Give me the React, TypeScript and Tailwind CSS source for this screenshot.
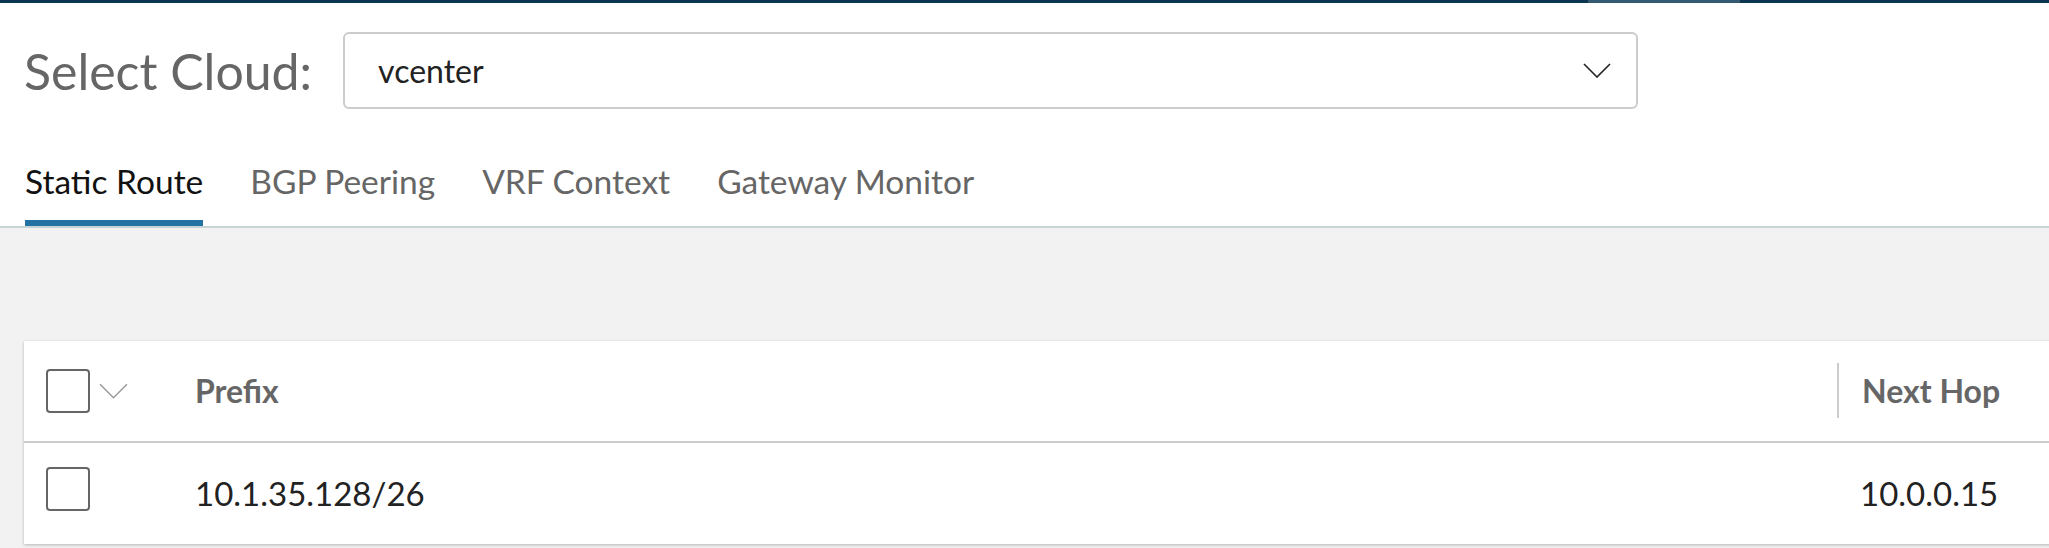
import React from 'react'

const tabs = ['Static Route', 'BGP Peering', 'VRF Context', 'Gateway Monitor']

const Checkbox = ({ className = '' }: { className?: string }) => (
  <div className={`w-[44px] h-[44px] border-2 border-[#666] rounded-[4px] bg-white ${className}`} />
)

const Chevron = ({ className = '', stroke = '#222', width = 1.6 }: { className?: string; stroke?: string; width?: number }) => (
  <svg viewBox="0 0 28 15" className={className} fill="none">
    <path d="M1 1 L14 14 L27 1" stroke={stroke} strokeWidth={width} />
  </svg>
)

export default function App() {
  return (
    <div className="w-[2049px] h-[548px] overflow-hidden bg-[#f2f2f2] font-['Lato',sans-serif]">
      {/* top bar */}
      <div className="flex h-[3px]">
        <div className="flex-1 bg-[#0b3651]" />
        <div className="w-[152px] bg-[#335a70]" />
        <div className="w-[309px] bg-[#0b3651]" />
      </div>

      <div className="bg-white">
        {/* cloud selector */}
        <div className="flex items-center pl-[24px] pt-[29px]">
          <span className="text-[50px] leading-none text-[#666]">Select Cloud:</span>
          <div className="ml-[31px] w-[1295px] h-[77px] border-2 border-[#ccc] rounded-[6px] flex items-center justify-between pl-[33px] pr-[25px]">
            <span className="text-[32px] leading-none text-[#222]">vcenter</span>
            <Chevron className="w-[28px] h-[15px]" />
          </div>
        </div>

        {/* tabs */}
        <div className="mt-[56px] flex gap-[47px] pl-[25px] border-b-2 border-[#c8d4d4]">
          {tabs.map((t, i) => (
            <div
              key={t}
              className={`text-[33.5px] leading-none pb-[21px] border-b-[6px] ${
                i === 0 ? 'text-[#111] border-[#2471a3]' : 'text-[#666] border-transparent'
              }`}
            >
              {t}
            </div>
          ))}
        </div>
      </div>

      {/* table */}
      <div className="pt-[113px] pl-[24px]">
        <div className="w-[2100px] bg-white shadow-[0_1px_3px_rgba(0,0,0,0.25)]">
          <div className="flex items-center h-[102px] border-b-2 border-[#ccc]">
            <div className="w-[171px] pl-[22px] flex items-center">
              <Checkbox />
              <Chevron className="ml-[9px] w-[29px] h-[16px]" stroke="#999" width={1.4} />
            </div>
            <div className="w-[1642px] text-[32px] font-bold text-[#666] leading-none">Prefix</div>
            <div className="w-[2px] h-[55px] bg-[#ccc]" />
            <div className="pl-[23px] text-[32px] font-bold text-[#666] leading-none">Next Hop</div>
          </div>
          <div className="flex items-center h-[101px]">
            <div className="w-[171px] pl-[22px] flex items-center">
              <Checkbox className="mb-[8px]" />
            </div>
            <div className="w-[1642px] text-[33px] text-[#222] leading-none">10.1.35.128/26</div>
            <div className="w-[2px]" />
            <div className="pl-[21px] text-[33px] text-[#222] leading-none">10.0.0.15</div>
          </div>
        </div>
      </div>
    </div>
  )
}
